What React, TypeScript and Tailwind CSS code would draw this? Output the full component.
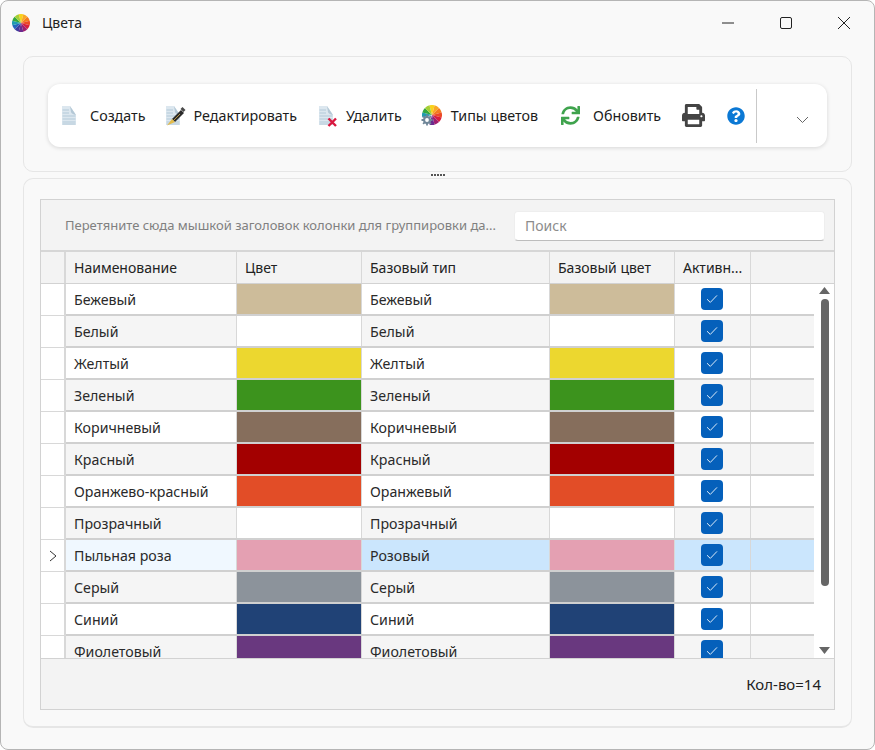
import { FaSync, FaPrint, FaQuestionCircle } from "react-icons/fa";

const COLS = [
  "w-[171px]",
  "w-[125px]",
  "w-[188px]",
  "w-[125px]",
  "w-[76px]",
];

const rows = [
  ["Бежевый", "#cdbc9a", "Бежевый"],
  ["Белый", "#ffffff", "Белый"],
  ["Желтый", "#ecd72f", "Желтый"],
  ["Зеленый", "#3c931d", "Зеленый"],
  ["Коричневый", "#866e5c", "Коричневый"],
  ["Красный", "#a30000", "Красный"],
  ["Оранжево-красный", "#e24d27", "Оранжевый"],
  ["Прозрачный", "#ffffff", "Прозрачный"],
  ["Пыльная роза", "#e4a0b2", "Розовый"],
  ["Серый", "#8c939b", "Серый"],
  ["Синий", "#204276", "Синий"],
  ["Фиолетовый", "#69387f", "Фиолетовый"],
];

const WHEEL = ["#f8d21c", "#f9a825", "#f47b20", "#ec4a26", "#d81e3f", "#a01e6e", "#6b2a8e", "#3f3a9e", "#2467bd", "#1f9bb0", "#35a83f", "#a5cf35"];

function Wheel({ size, skip = [] }: { size: number; skip?: number[] }) {
  const wedges = [];
  for (let i = 0; i < 12; i++) {
    if (skip.includes(i)) continue;
    const a0 = ((i * 30 - 90 - 15) * Math.PI) / 180;
    const a1 = (((i + 1) * 30 - 90 - 15) * Math.PI) / 180;
    wedges.push(
      <path
        key={i}
        d={`M12 12 L${12 + 12 * Math.cos(a0)} ${12 + 12 * Math.sin(a0)} A12 12 0 0 1 ${12 + 12 * Math.cos(a1)} ${12 + 12 * Math.sin(a1)} Z`}
        fill={WHEEL[i]}
      />
    );
  }
  return (
    <svg width={size} height={size} viewBox="0 0 24 24" className="shrink-0">
      {wedges}
    </svg>
  );
}

function DocIcon({ mark }: { mark?: "edit" | "del" }) {
  return (
    <svg width="22" height="22" viewBox="0 0 22 22" className="shrink-0">
      <path d="M2 1 H10 L16 10 V20 H2 Z" fill="#dce7ef" />
      <path d="M10 1 L11 7 Q11.5 9 16 10 Z" fill="#b4c8d6" />
      {[5, 8, 11, 14, 17, 19].map((y) => (
        <path key={y} d={`M2.5 ${y} H${y < 10 ? 9 : 15.5}`} stroke="#b3c9d8" strokeWidth="1" />
      ))}
      {mark === "edit" && (
        <>
          <path d="M8 14 L17 5 L20 8 L11 17 Z" fill="#2b2b2b" />
          <path d="M3 20.5 L8 14 L11 17 Z" fill="#e3bb4b" />
          <path d="M16.5 4 L18.5 2 L21.5 5 L19.5 7 Z" fill="#4a4a4a" />
          <path d="M10 15 L16 9" stroke="#d9b04a" strokeWidth="0.8" />
        </>
      )}
      {mark === "del" && <path d="M11.5 13.5 L19 21 M19 13.5 L11.5 21" stroke="#d9173f" strokeWidth="2.4" />}
    </svg>
  );
}

function Gear() {
  return (
    <svg width="12" height="12" viewBox="0 0 12 12" className="absolute left-0 bottom-0">
      <path d="M6 0.5 V11.5 M0.5 6 H11.5 M2.1 2.1 L9.9 9.9 M9.9 2.1 L2.1 9.9" stroke="#6f8698" strokeWidth="1.8" />
      <circle cx="6" cy="6" r="3.9" fill="#6f8698" />
      <circle cx="6" cy="6" r="1.9" fill="#fff" />
    </svg>
  );
}

function Check() {
  return (
    <div className="w-[22px] h-[22px] rounded-[4px] bg-[#0560bb] flex items-center justify-center">
      <svg width="12" height="10" viewBox="0 0 12 10" fill="none">
        <path d="M1 5.2 L4.3 8.4 L11 1.4" stroke="#dcebf9" strokeWidth="1" />
      </svg>
    </div>
  );
}

function ToolButton({ icon, label, className }: { icon: React.ReactNode; label: string; className: string }) {
  return (
    <div className={`flex items-center ${className}`}>
      {icon}
      <span className="text-[14.3px] text-[#1c1c1c] whitespace-nowrap">{label}</span>
    </div>
  );
}

function Row({ row, index }: { row: string[]; index: number }) {
  const selected = index === 8;
  const odd = index % 2 === 1;
  const bg = selected ? "bg-[#cbe6fd]" : odd ? "bg-[#f5f5f5]" : "bg-white";
  const [name, color, base] = row;
  return (
    <div className="flex h-[32px] shrink-0 text-[14.2px] text-[#2a2a2a]">
      <div className="w-[25px] shrink-0 bg-white border-r-[2px] border-b-[1px] border-[#d8d8d8] flex items-center justify-center">
        {selected && (
          <svg width="8" height="12" viewBox="0 0 8 12" fill="none">
            <path d="M1 1 L7 6 L1 11" stroke="#333" strokeWidth="1" />
          </svg>
        )}
      </div>
      <div className="flex-1 flex border-b-[2px] border-[#d0d0d0]">
        <div className={`${COLS[0]} shrink-0 pl-[8px] pt-[2px] flex items-center ${selected ? "bg-[#f0f8ff]" : bg} border-r-[1px] border-[#d8d8d8]`}>{name}</div>
        <div className={`${COLS[1]} shrink-0 border-r-[1px] border-[#d8d8d8]`} style={{ backgroundColor: color }} />
        <div className={`${COLS[2]} shrink-0 pl-[8px] pt-[2px] flex items-center ${bg} border-r-[1px] border-[#d8d8d8]`}>{base}</div>
        <div className={`${COLS[3]} shrink-0 border-r-[1px] border-[#d8d8d8]`} style={{ backgroundColor: color }} />
        <div className={`${COLS[4]} shrink-0 flex items-center justify-center pr-[1px] ${bg} border-r-[1px] border-[#d8d8d8]`}>
          <Check />
        </div>
        <div className={`flex-1 ${bg}`} />
      </div>
    </div>
  );
}

export default function App() {
  return (
    <div className="w-[875px] h-[750px] bg-white font-['Noto_Sans','Open_Sans',sans-serif] text-[14px] text-[#222] overflow-hidden">
      <div className="w-full h-full flex flex-col bg-[#f9f9f9] border border-[#b5b5b5] rounded-[8px]">
        {/* title bar */}
        <div className="h-[55px] shrink-0 flex items-center pl-[11px] pb-[12px]">
          <Wheel size={18} />
          <span className="ml-[12px] text-[#222]">Цвета</span>
          <div className="ml-auto flex items-center">
            <svg width="14" height="14" viewBox="0 0 14 14" className="mr-[44px]">
              <path d="M1 7 H13" stroke="#222" strokeWidth="1" />
            </svg>
            <svg width="14" height="14" viewBox="0 0 14 14" className="mr-[44px]">
              <rect x="1.5" y="1.5" width="11" height="11" rx="1.5" fill="none" stroke="#222" strokeWidth="1" />
            </svg>
            <svg width="14" height="14" viewBox="0 0 14 14" className="mr-[23px]">
              <path d="M1 1 L13 13 M13 1 L1 13" stroke="#222" strokeWidth="1" />
            </svg>
          </div>
        </div>

        {/* toolbar panel */}
        <div className="mx-[22px] h-[116px] shrink-0 rounded-[10px] border border-[#e6e6e6] bg-[#f9f9f9] flex items-center px-[24px] pt-[3px]">
          <div className="w-full h-[63px] rounded-[12px] bg-white shadow-[0_1px_4px_rgba(0,0,0,0.14)] flex items-center relative">
            <ToolButton className="ml-[12px] gap-[8px]" icon={<DocIcon />} label="Создать" />
            <ToolButton className="ml-[18px] gap-[8px]" icon={<DocIcon mark="edit" />} label="Редактировать" />
            <ToolButton className="ml-[20px] gap-[7px]" icon={<DocIcon mark="del" />} label="Удалить" />
            <ToolButton
              className="ml-[19px] gap-[9px]"
              icon={
                <span className="relative block w-[21px] h-[21px] -mt-[1px]">
                  <span className="absolute right-0 top-0 block">
                    <Wheel size={20} skip={[7, 8]} />
                  </span>
                  <Gear />
                </span>
              }
              label="Типы цветов"
            />
            <ToolButton className="ml-[23px] gap-[13px]" icon={<FaSync size={19} color="#3fa34d" />} label="Обновить" />
            <FaPrint size={23} color="#444444" className="ml-[21px]" />
            <FaQuestionCircle size={18} color="#0b78d4" className="ml-[22px]" />
            <div className="ml-[11px] w-px h-[54px] bg-[#c9c9c9]" />
            <svg width="13" height="8" viewBox="0 0 13 8" className="ml-[39px] mt-[8px]" fill="none">
              <path d="M1 1 L6.5 6.5 L12 1" stroke="#666" strokeWidth="1" />
            </svg>
          </div>
        </div>

        {/* splitter */}
        <div className="h-[6px] shrink-0 flex items-center justify-center gap-[1px]">
          {[0, 1, 2, 3, 4].map((i) => (
            <span key={i} className="w-[2px] h-[2px] bg-[#555]" />
          ))}
        </div>

        {/* grid panel */}
        <div className="mx-[22px] h-[550px] shrink-0 rounded-[10px] border border-[#e6e6e6] border-b-[2px] p-[16px] pt-[20px]">
          <div className="h-[511px] border border-[#d2d2d2] flex flex-col bg-[#f3f3f3]">
            <div className="h-[52px] shrink-0 flex items-center pl-[24px] border-b-[2px] border-[#d6d6d6] pt-[1px]">
              <span className="w-[449px] text-[13px] text-[#808080] whitespace-nowrap">Перетяните сюда мышкой заголовок колонки для группировки да...</span>
              <div className="h-[30px] w-[311px] bg-white rounded-[4px] border border-[#eeeeee] border-b-[#bdbdbd] flex items-center pl-[10px] text-[#8c8c8c]">Поиск</div>
            </div>
            <div className="h-[32px] shrink-0 flex border-b border-[#d2d2d2] bg-[#f3f3f3]">
              <div className="w-[25px] shrink-0 border-r-[2px] border-[#d8d8d8]" />
              {["Наименование", "Цвет", "Базовый тип", "Базовый цвет", "Активн..."].map((h, i) => (
                <div key={h} className={`${COLS[i]} shrink-0 pl-[8px] flex items-center border-r-[1px] border-[#d8d8d8]`}>
                  {h}
                </div>
              ))}
            </div>
            <div className="h-[375px] shrink-0 flex overflow-hidden bg-white border-b border-[#d2d2d2]">
              <div className="flex-1 flex flex-col">
                {rows.map((r, i) => (
                  <Row key={r[0]} row={r} index={i} />
                ))}
              </div>
              <div className="w-[20px] shrink-0 bg-white flex flex-col items-center pt-[3px] pl-[1px]">
                <svg width="11" height="7" viewBox="0 0 11 7" className="shrink-0">
                  <path d="M5.5 0 L11 7 H0 Z" fill="#666" />
                </svg>
                <div className="w-[8px] h-[287px] shrink-0 mt-[5px] rounded-full bg-[#666666]" />
                <svg width="11" height="7" viewBox="0 0 11 7" className="mt-[61px] shrink-0">
                  <path d="M0 0 H11 L5.5 7 Z" fill="#666" />
                </svg>
              </div>
            </div>
            <div className="flex-1 flex items-center justify-end pr-[13px] text-[15px]">Кол-во=14</div>
          </div>
        </div>
      </div>
    </div>
  );
}
